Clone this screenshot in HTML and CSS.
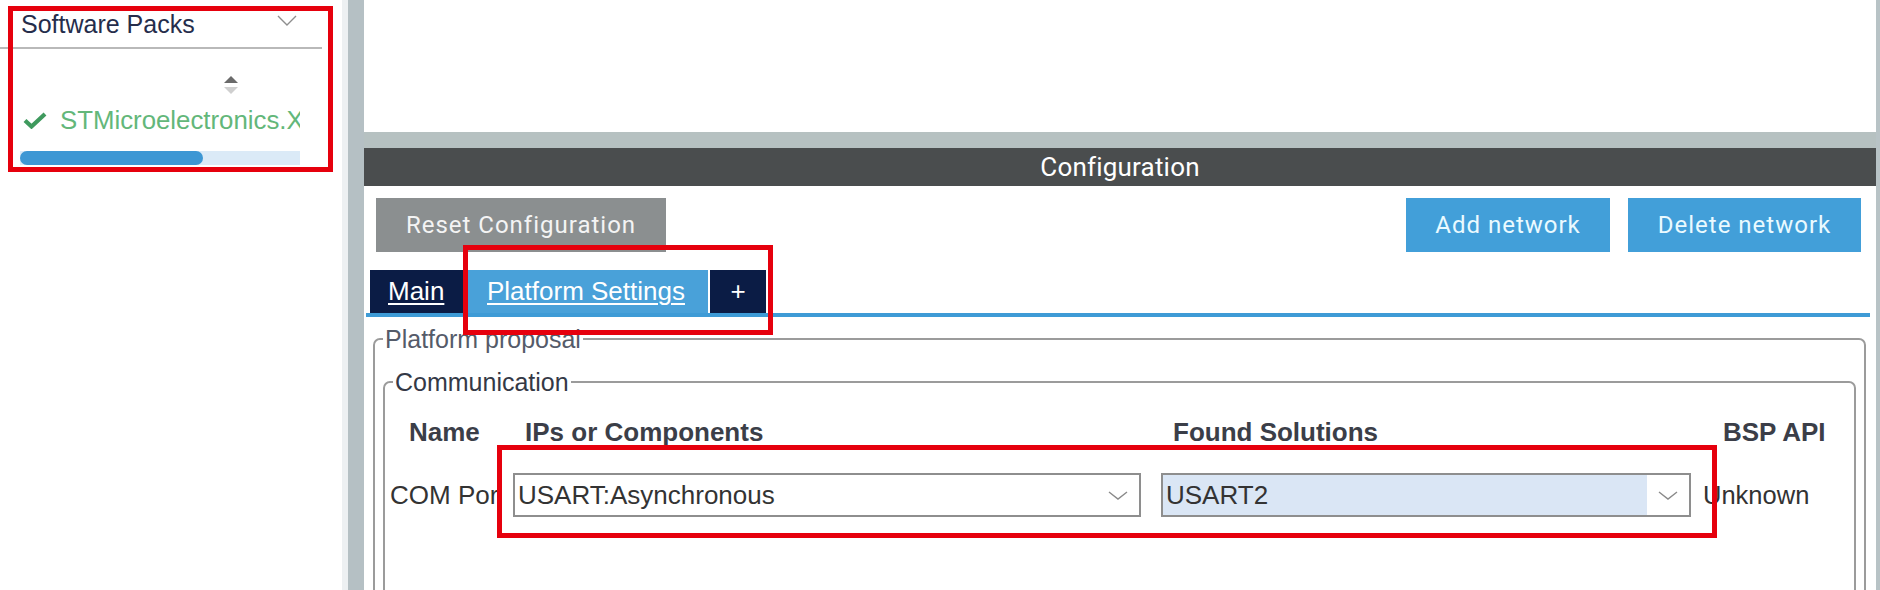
FILE: index.html
```html
<!DOCTYPE html>
<html>
<head>
<meta charset="utf-8">
<title>Configuration</title>
<link rel="stylesheet" href="styles.css">
</head>
<body>
<div class="app">
  <aside class="sidebar">
    <div class="sp-header">
      <span class="sp-title">Software Packs</span>
      <svg class="sp-chev" width="20" height="11" viewBox="0 0 20 11"><polyline points="1,1 10,10 19,1" fill="none" stroke="#8e8e8e" stroke-width="1.4"/></svg>
    </div>
    <div class="sp-sort">
      <svg width="16" height="19" viewBox="0 0 16 19"><polygon points="8,0 15,7 1,7" fill="#6a6a6a"/><polygon points="1,11 15,11 8,18" fill="#cfcfcf"/></svg>
    </div>
    <div class="sp-row">
      <svg class="sp-check" width="24" height="17" viewBox="0 0 24 17"><polyline points="2,8.5 8.5,14.5 22,2" fill="none" stroke="#3f9a5e" stroke-width="4.2"/></svg>
      <span class="sp-name">STMicroelectronics.X-CUBE-AI</span>
    </div>
    <div class="sp-progress"><div class="sp-progress-fill" style="width:183px"></div></div>
  </aside>
  <div class="splitter"></div>
  <main class="main">
    <div class="top-blank"></div>
    <div class="band"></div>
    <div class="config-header">Configuration</div>
    <div class="config-body">
      <div class="toolbar">
        <button class="btn btn-gray">Reset Configuration</button>
        <div class="spacer"></div>
        <button class="btn btn-blue btn-add">Add network</button>
        <button class="btn btn-blue btn-del">Delete network</button>
      </div>
      <div class="tabs">
        <div class="tab tab-dark tab-main"><span class="tab-label">Main</span></div>
        <div class="tab tab-active"><span class="tab-label">Platform Settings</span></div>
        <div class="tab tab-dark tab-plus">+</div>
      </div>
      <div class="tab-content">
        <fieldset class="group group-outer">
          <legend>Platform proposal</legend>
          <fieldset class="group group-inner">
            <legend>Communication</legend>
            <div class="grid">
              <div class="th th-name">Name</div>
              <div class="th th-ips">IPs or Components</div>
              <div class="th th-found">Found Solutions</div>
              <div class="th th-bsp">BSP API</div>

              <div class="td td-name"><span class="clip">COM Port</span></div>
              <div class="td">
                <div class="combo combo-ips">
                  <div class="combo-value">USART:Asynchronous</div>
                  <div class="combo-arrow"><svg width="20" height="9" viewBox="0 0 20 9"><polyline points="1,1 10,8 19,1" fill="none" stroke="#8a8a8a" stroke-width="1.4"/></svg></div>
                </div>
              </div>
              <div class="td">
                <div class="combo combo-found">
                  <div class="combo-value selected">USART2</div>
                  <div class="combo-arrow"><svg width="20" height="9" viewBox="0 0 20 9"><polyline points="1,1 10,8 19,1" fill="none" stroke="#8a8a8a" stroke-width="1.4"/></svg></div>
                </div>
              </div>
              <div class="td td-bsp">Unknown</div>
            </div>
          </fieldset>
        </fieldset>
      </div>
    </div>
  </main>
  <div class="edge"></div>
</div>
<div class="hl hl-side"></div>
<div class="hl hl-tabs"></div>
<div class="hl hl-row"></div>
</body>
</html>
```
FILE: styles.css
```css
* { box-sizing: border-box; }
html, body { margin: 0; padding: 0; }
body {
  width: 1880px;
  height: 590px;
  overflow: hidden;
  position: relative;
  background: #ffffff;
  font-family: "Liberation Sans", Arial, sans-serif;
  color: #333333;
}
.app { display: flex; width: 1880px; height: 590px; overflow: hidden; }

/* Sidebar */
.sidebar { width: 342px; flex: none; background: #ffffff; padding-right: 20px; }
.sp-header {
  height: 49px;
  display: flex;
  align-items: center;
  border-bottom: 2px solid #b9b9b9;
}
.sp-title { padding-left: 21px; font-size: 25px; color: #252d4b; padding-top: 1px; }
.sp-chev { margin-left: auto; margin-right: 25px; align-self: flex-start; margin-top: 15px; }
.sp-sort { padding-top: 27px; padding-left: 223px; height: 46px; }
.sp-sort svg { display: block; }
.sp-row {
  margin-top: 6px;
  height: 38px;
  width: 300px;
  display: flex;
  align-items: center;
  overflow: hidden;
  white-space: nowrap;
}
.sp-check { flex: none; margin-left: 23px; }
.sp-name { margin-left: 13px; font-size: 25.8px; color: #63b77a; }
.sp-progress {
  margin-top: 12px;
  margin-left: 20px;
  width: 280px;
  height: 14px;
  background: #dbeaf7;
}
.sp-progress-fill { height: 14px; background: #3d97d4; border-radius: 7px; }

/* Splitter */
.splitter { width: 22px; flex: none; background: #b5c0c4; border-left: 6px solid #edf0f2; }
.edge { width: 4px; flex: none; background: #b8c3c6; }

/* Main */
.main { flex: 1; display: flex; flex-direction: column; background: #ffffff; min-width: 0; overflow: hidden; }
.main > * { flex: none; }
.top-blank { height: 132px; }
.band { height: 16px; background: #b6c1c1; }
.config-header {
  height: 38px;
  background: #4a4d4e;
  color: #ffffff;
  font-family: Roboto, "Liberation Sans", sans-serif;
  font-size: 26px;
  letter-spacing: 0.2px;
  display: flex;
  align-items: center;
  justify-content: center;
}
.config-body { padding-top: 12px; }
.toolbar { display: flex; height: 54px; padding-left: 12px; padding-right: 15px; gap: 18px; }
.spacer { flex: 1; }
.btn {
  height: 54px;
  border: none;
  margin: 0;
  padding: 0;
  font-family: Roboto, "Liberation Sans", sans-serif;
  font-size: 24px;
  letter-spacing: 1px;
}
.btn-gray { width: 290px; background: #8b8f90; color: #f4f4f4; }
.btn-blue { background: #429fd9; color: #eafaff; }
.btn-add { width: 204px; }
.btn-del { width: 233px; }

/* Tabs */
.tabs {
  margin-top: 18px;
  margin-left: 2px;
  margin-right: 6px;
  padding-left: 4px;
  display: flex;
  border-bottom: 4px solid #3e9bd6;
}
.tab {
  height: 43px;
  display: flex;
  align-items: center;
  color: #ffffff;
  font-size: 26px;
}
.tab-label { text-decoration: underline; text-decoration-thickness: 2px; text-underline-offset: 3px; }
.tab-dark { background: #0b1c45; }
.tab-main { width: 96px; padding-left: 18px; }
.tab-active { width: 242px; padding-left: 21px; background: #49a1d9; }
.tab-plus { width: 56px; margin-left: 2px; justify-content: center; font-size: 26px; }

/* Tab content */
.tab-content { padding: 7px 10px 0 9px; }
.group {
  margin: 0;
  border: 2px solid #9b9b9b;
  border-radius: 7px;
  min-inline-size: 0;
}
.group legend {
  padding: 0 2px;
  font-size: 25px;
  line-height: 30px;
}
.group-outer { padding: 0 8px 0 8px; height: 300px; }
.group-outer > legend { margin-left: 0; color: #555b69; }
.group-inner { padding: 0; margin-top: 13px; height: 280px; }
.group-inner > legend { margin-left: 8px; color: #343946; }

.grid {
  display: grid;
  grid-template-columns: 128px 648px 542px 1fr;
  grid-template-rows: 30px 44px;
  row-gap: 26px;
  margin-top: 20px;
}
.th { font-weight: bold; font-size: 26px; line-height: 30px; color: #3b3e48; white-space: nowrap; }
.th-name { padding-left: 24px; }
.th-ips { padding-left: 12px; }
.th-found { padding-left: 12px; }
.th-bsp { padding-left: 20px; }
.td { font-size: 26px; display: flex; align-items: center; white-space: nowrap; }
.td-name { padding-left: 5px; }
.clip { display: block; max-width: 112px; overflow: hidden; }
.td-bsp { color: #333333; font-size: 25.5px; }

.combo {
  height: 44px;
  border: 2px solid #8e8e8e;
  display: flex;
  background: #ffffff;
}
.combo-ips { width: 628px; }
.combo-found { width: 530px; }
.combo-value {
  flex: 1;
  padding-left: 3px;
  display: flex;
  align-items: center;
  font-size: 26px;
  color: #333333;
}
.combo-value.selected { background: #dae6f5; }
.combo-arrow { width: 42px; display: flex; align-items: center; justify-content: center; }
.combo-arrow svg { display: block; }

/* Highlight overlays */
.hl { position: absolute; border: 5px solid #e6000d; pointer-events: none; }
.hl-side { left: 8px; top: 6px; width: 325px; height: 166px; }
.hl-tabs { left: 463px; top: 245px; width: 310px; height: 90px; }
.hl-row { left: 497px; top: 445px; width: 1220px; height: 93px; }
```
